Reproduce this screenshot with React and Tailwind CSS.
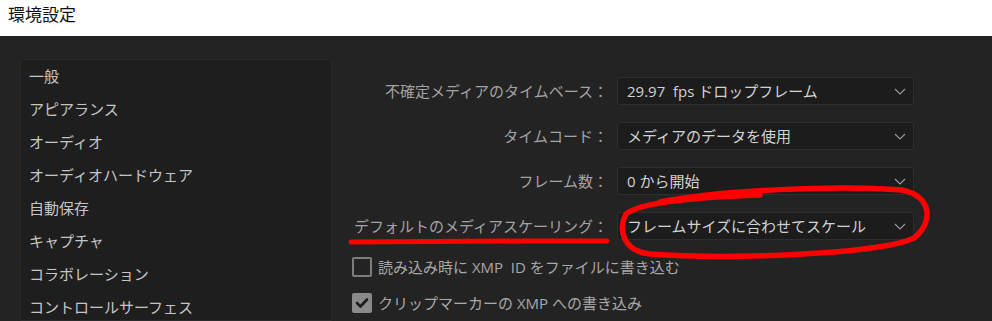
import React from "react";

const font = { fontFamily: '"Open Sans", "Noto Sans CJK JP", "Noto Sans", sans-serif' };

const leftItems = [
  "一般",
  "アピアランス",
  "オーディオ",
  "オーディオハードウェア",
  "自動保存",
  "キャプチャ",
  "コラボレーション",
  "コントロールサーフェス",
];

const rows = [
  ["不確定メディアのタイムベース：", "29.97  fps ドロップフレーム"],
  ["タイムコード：", "メディアのデータを使用"],
  ["フレーム数：", "0 から開始"],
  ["デフォルトのメディアスケーリング：", "フレームサイズに合わせてスケール"],
];

function Chevron() {
  return (
    <svg width="12" height="7" viewBox="0 0 12 7" className="shrink-0">
      <polyline points="1,1 6,6 11,1" fill="none" stroke="#9c9c9c" strokeWidth="1.1" />
    </svg>
  );
}

export default function App() {
  return (
    <div className="w-[992px] h-[321px] overflow-hidden relative bg-[#232323]" style={font}>
      <div className="h-9 bg-white pl-2 flex items-center text-[17px] text-[#111] pb-[6px]">環境設定</div>
      <div className="flex h-[285px] pt-[23px] pl-5">
        <div className="w-[312px] bg-[#1e1e1e] border border-[#2b2b2b] rounded-t-[3px] shrink-0">
          {leftItems.map((t, i) => (
            <div key={i} className="h-[33px] flex items-center pl-2 text-[15px] text-[#c6c6c6]">
              {t}
            </div>
          ))}
        </div>
        <div className="flex flex-col mt-[18px]">
          {rows.map(([label, value], i) => (
            <div key={i} className="flex items-center mb-[17px]">
              <div className="w-[276px] text-right text-[15px] text-[#a3a3a3] whitespace-nowrap">{label}</div>
              <div className="ml-[9px] w-[297px] h-[28px] bg-[#1c1c1c] border border-[#2e2e2e] rounded-[2px] flex items-center justify-between pl-[9px] pr-[7px]">
                <span className="text-[15px] text-[#d2d2d2] whitespace-pre">{value}</span>
                <Chevron />
              </div>
            </div>
          ))}
          <div className="flex items-center ml-5 h-5">
            <div className="w-5 h-5 border-2 border-[#7c7c7c] rounded-[2px]" />
            <span className="ml-[6px] text-[15px] text-[#a8a8a8] whitespace-pre">読み込み時に XMP  ID をファイルに書き込む</span>
          </div>
          <div className="flex items-center ml-5 h-5 mt-4">
            <div className="w-5 h-5 bg-[#8a8a8a] rounded-[2px] flex items-center justify-center">
              <svg width="14" height="12" viewBox="0 0 14 12">
                <polyline points="2,6 5.5,9.5 12,2.5" fill="none" stroke="#1e1e1e" strokeWidth="2.6" strokeLinecap="round" strokeLinejoin="round" />
              </svg>
            </div>
            <span className="ml-[6px] text-[15px] text-[#a8a8a8] whitespace-pre">クリップマーカーの XMP への書き込み</span>
          </div>
        </div>
      </div>
      <svg className="absolute left-0 top-0 pointer-events-none" width="992" height="321" viewBox="0 0 992 321">
        <path d="M 351 242 C 420 241, 520 241, 607 241" fill="none" stroke="#ff0000" strokeWidth="5" strokeLinecap="round" />
        <path
          d="M 660 202 C 720 190, 840 185, 902 190 C 932 196, 934 222, 914 238 C 880 254, 730 260, 650 254 C 622 251, 618 228, 626 214 C 640 202, 700 197, 760 195"
          fill="none"
          stroke="#ff0000"
          strokeWidth="5.5"
          strokeLinecap="round"
        />
      </svg>
    </div>
  );
}
